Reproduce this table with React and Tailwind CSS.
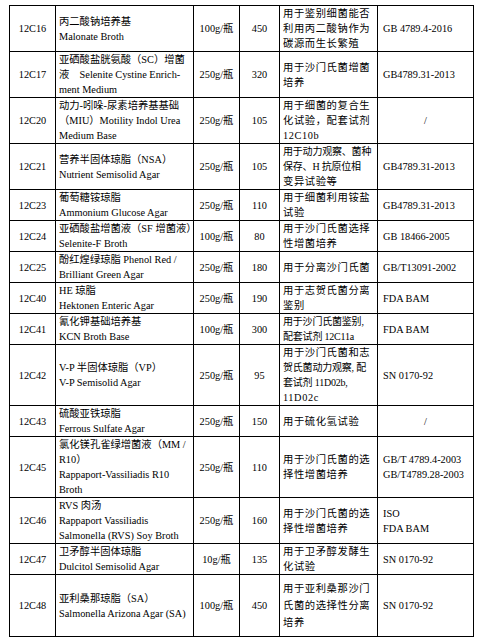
const rows = [
  ['12C16', ['丙二酸钠培养基', 'Malonate Broth'], '100g/瓶', '450', ['用于鉴别细菌能否', '利用丙二酸钠作为', '碳源而生长繁殖'], ['GB 4789.4-2016']],
  ['12C17', ['亚硒酸盐胱氨酸（SC）增菌', '液　Selenite Cystine Enrich-', 'ment Medium'], '250g/瓶', '320', ['用于沙门氏菌增菌', '培养'], ['GB4789.31-2013']],
  ['12C20', ['动力-吲哚-尿素培养基基础', '（MIU）Motility Indol Urea', 'Medium Base'], '250g/瓶', '105', ['用于细菌的复合生', '化试验，配套试剂', '12C10b'], ['/'], true],
  ['12C21', ['营养半固体琼脂（NSA）', 'Nutrient Semisolid Agar'], '250g/瓶', '105', ['用于动力观察、菌种', '保存、H 抗原位相', '变异试验等'], ['GB4789.31-2013']],
  ['12C23', ['葡萄糖铵琼脂', 'Ammonium Glucose Agar'], '250g/瓶', '110', ['用于细菌利用铵盐', '试验'], ['GB4789.31-2013']],
  ['12C24', ['亚硒酸盐增菌液（SF 增菌液）', 'Selenite-F Broth'], '100g/瓶', '80', ['用于沙门氏菌选择', '性增菌培养'], ['GB 18466-2005']],
  ['12C25', ['酚红煌绿琼脂 Phenol Red /', 'Brilliant Green Agar'], '250g/瓶', '180', ['用于分离沙门氏菌'], ['GB/T13091-2002']],
  ['12C40', ['HE 琼脂', 'Hektonen Enteric Agar'], '250g/瓶', '190', ['用于志贺氏菌分离', '鉴别'], ['FDA BAM']],
  ['12C41', ['氰化钾基础培养基', 'KCN Broth Base'], '100g/瓶', '300', ['用于沙门氏菌鉴别,', '配套试剂 12C11a'], ['FDA BAM']],
  ['12C42', ['V-P 半固体琼脂（VP）', 'V-P Semisolid Agar'], '250g/瓶', '95', ['用于沙门氏菌和志', '贺氏菌动力观察, 配', '套试剂 11D02b,', '11D02c'], ['SN 0170-92']],
  ['12C43', ['硫酸亚铁琼脂', 'Ferrous Sulfate Agar'], '250g/瓶', '150', ['用于硫化氢试验'], ['/'], true],
  ['12C45', ['氯化镁孔雀绿增菌液（MM /', 'R10）', 'Rappaport-Vassiliadis R10', 'Broth'], '250g/瓶', '110', ['用于沙门氏菌的选', '择性增菌培养'], ['GB/T 4789.4-2003', 'GB/T4789.28-2003']],
  ['12C46', ['RVS 肉汤', 'Rappaport Vassiliadis', 'Salmonella (RVS) Soy Broth'], '250g/瓶', '160', ['用于沙门氏菌的选', '择性增菌培养'], ['ISO', 'FDA BAM']],
  ['12C47', ['卫矛醇半固体琼脂', 'Dulcitol Semisolid Agar'], '10g/瓶', '135', ['用于卫矛醇发酵生', '化试验'], ['SN 0170-92']],
  ['12C48', ['亚利桑那琼脂（SA）', 'Salmonella Arizona Agar (SA)'], '100g/瓶', '450', ['用于亚利桑那沙门', '氏菌的选择性分离', '培养'], ['SN 0170-92'], false, true],
]

function Lines({ lines, spaced }) {
  return lines.map((l, i) => (
    <div
      key={i}
      className={
        spaced && l.length <= 8
          ? 'whitespace-nowrap tracking-[0.6px]'
          : spaced
            ? 'whitespace-nowrap text-[10px] tracking-[-0.2px]'
            : 'whitespace-nowrap'
      }
    >
      {l}
    </div>
  ))
}

export default function App() {
  return (
    <div
      className="w-[479px] h-[640px] bg-white text-black text-[10.3px] leading-[15px]"
      style={{ fontFamily: '"Liberation Serif", "Noto Sans CJK SC", serif' }}
    >
      <div className="pt-[5px] pl-[9px]">
        <div className="grid w-fit grid-cols-[45px_137px_45px_39px_97px_95px] grid-rows-[45px_45px_45px_45px_30px_30px_30px_30px_30px_60px_30px_60px_45px_30px_61px] gap-px border border-black bg-black">
          {rows.map(([code, name, spec, qty, usage, std, stdCenter, tall]) => (
            <div key={code} className="contents">
              <div className="bg-white flex items-center justify-center">{code}</div>
              <div className="bg-white flex flex-col justify-center pl-[3px]">
                <Lines lines={name} />
              </div>
              <div className="bg-white flex items-center justify-center">{spec}</div>
              <div className="bg-white flex items-center justify-center">{qty}</div>
              <div
                className={
                  tall
                    ? 'bg-white flex flex-col justify-center pl-[3px] leading-[17px]'
                    : 'bg-white flex flex-col justify-center pl-[3px]'
                }
              >
                <Lines lines={usage} spaced />
              </div>
              <div
                className={
                  stdCenter
                    ? 'bg-white flex flex-col justify-center items-center'
                    : 'bg-white flex flex-col justify-center pl-[5px]'
                }
              >
                <Lines lines={std} />
              </div>
            </div>
          ))}
        </div>
      </div>
    </div>
  )
}
